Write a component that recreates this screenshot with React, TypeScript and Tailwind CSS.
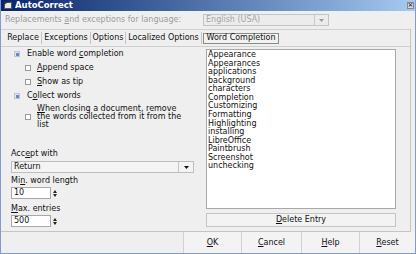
import React from "react";

const U = ({ children }: { children: React.ReactNode }) => <span className="underline underline-offset-[1px]">{children}</span>;

const Check = ({ checked }: { checked?: boolean }) => (
  <span className={`inline-flex items-center justify-center w-[6px] h-[6px] border ${checked ? "border-[#b8c4dc] bg-[#dfe5f2]" : "border-[#9a9a9a] bg-white"}`}>
    {checked && <span className="w-[3px] h-[3px] bg-[#6f86c4]" />}
  </span>
);

const Spin = ({ value }: { value: string }) => (
  <div className="flex h-[12px] w-[48px]">
    <div className="w-[40px] h-full bg-white border border-[#a8a8a8] flex items-center pl-[2px] leading-none">{value}</div>
    <div className="w-[8px] h-full flex flex-col items-center justify-center gap-[1px]">
      <svg width="4" height="3" viewBox="0 0 4 3"><path d="M0 3 L2 0 L4 3 Z" fill="#222" /></svg>
      <svg width="4" height="3" viewBox="0 0 4 3"><path d="M0 0 L4 0 L2 3 Z" fill="#222" /></svg>
    </div>
  </div>
);

const words = [
  "Appearance",
  "Appearances",
  "applications",
  "background",
  "characters",
  "Completion",
  "Customizing",
  "Formatting",
  "Highlighting",
  "installing",
  "LibreOffice",
  "Paintbrush",
  "Screenshot",
  "unchecking",
];

export default function App() {
  return (
    <div
      className="w-[416px] h-[254px] bg-[#efefef] flex flex-col overflow-hidden border-x border-b border-[#7f9bd2] text-[8px] text-[#111]"
      style={{ fontFamily: '"DejaVu Sans", sans-serif' }}
    >
      {/* Title bar */}
      <div className="h-[11px] shrink-0 flex items-center bg-gradient-to-r from-[#0a246a] to-[#a6caf0] pl-[3px] pr-[1px]">
        <svg width="8" height="7" viewBox="0 0 8 7" className="mr-[3px]">
          <rect x="0.5" y="0.5" width="7" height="6" fill="#e8e8e8" stroke="#555" strokeWidth="1" />
          <path d="M0 0 L4 0 L0 3 Z" fill="#333" />
        </svg>
        <span className="text-white font-bold text-[8.5px] leading-none">AutoCorrect</span>
        <div className="ml-auto w-[7px] h-[7px] bg-[#d8d8d8] border border-[#888] flex items-center justify-center text-[7px] leading-none text-black">
          ×
        </div>
      </div>

      {/* Language row */}
      <div className="h-[18px] shrink-0 flex items-center pl-[4px]">
        <span className="text-[#9c9c9c] w-[198px]">
          Replacements <U>a</U>nd exceptions for language:
        </span>
        <div className="ml-[0px] w-[126px] h-[12px] border border-[#c4c4c4] bg-[#ececec] flex items-center">
          <span className="flex-1 pl-[2px] text-[#a4a4a4] leading-none">English (USA)</span>
          <div className="w-[14px] h-full border-l border-[#c8c8c8] flex items-center justify-center">
            <svg width="5" height="3" viewBox="0 0 5 3"><path d="M0 0 L5 0 L2.5 3 Z" fill="#9a9a9a" /></svg>
          </div>
        </div>
      </div>

      {/* Tabs + panel frame */}
      <div className="flex-1 flex flex-col border-t border-[#d0d0d0] border-b border-b-[#c4c4c4] mr-[4px] border-r border-r-[#c4c4c4]">
        <div className="h-[17px] shrink-0 flex items-center pl-[4px] border-b border-[#cfcfcf]">
          <div className="w-[37px] h-[12px] flex items-center justify-center border-r border-[#c4c4c4]">Replace</div>
          <div className="w-[49px] h-[12px] flex items-center justify-center border-r border-[#c4c4c4]">Exceptions</div>
          <div className="w-[35px] h-[12px] flex items-center justify-center border-r border-[#c4c4c4]">Options</div>
          <div className="w-[76px] h-[12px] flex items-center justify-center border-r border-[#c4c4c4]">Localized Options</div>
          <div className="w-[76px] h-[11px] ml-[1px] flex items-center justify-center border border-[#8a8a8a] bg-[#f2f2f2]">Word Completion</div>
        </div>

        <div className="flex-1 flex">
          {/* Left column */}
          <div className="w-[200px] flex flex-col">
            <div className="h-[14px] flex items-center pl-[13px] mt-[0px]">
              <Check checked />
              <span className="ml-[7px]">Enable word <U>c</U>ompletion</span>
            </div>
            <div className="h-[14px] flex items-center pl-[24px]">
              <Check />
              <span className="ml-[6px]"><U>A</U>ppend space</span>
            </div>
            <div className="h-[14px] flex items-center pl-[24px]">
              <Check />
              <span className="ml-[6px]"><U>S</U>how as tip</span>
            </div>
            <div className="h-[14px] flex items-center pl-[13px]">
              <Check checked />
              <span className="ml-[7px]">C<U>o</U>llect words</span>
            </div>
            <div className="flex items-center pl-[24px] mt-[2px]">
              <Check />
              <div className="ml-[6px] leading-[8px]">
                <div><U>W</U>hen closing a document, remove</div>
                <div>the words collected from it from the</div>
                <div>list</div>
              </div>
            </div>

            <div className="mt-[20px] pl-[10px] h-[10px] flex items-center">
              Acc<U>e</U>pt with
            </div>
            <div className="ml-[10px] mt-[2px] w-[183px] h-[12px] bg-[#f4f4f4] border border-[#bdbdbd] flex items-center">
              <span className="flex-1 pl-[2px] leading-none">Return</span>
              <div className="w-[15px] h-full border-l border-[#c4c4c4] flex items-center justify-center">
                <svg width="5" height="3" viewBox="0 0 5 3"><path d="M0 0 L5 0 L2.5 3 Z" fill="#111" /></svg>
              </div>
            </div>
            <div className="mt-[2px] pl-[10px] h-[11px] flex items-center">
              Mi<U>n</U>. word length
            </div>
            <div className="ml-[10px] mt-[1px]">
              <Spin value="10" />
            </div>
            <div className="mt-[4px] pl-[10px] h-[11px] flex items-center">
              <U>M</U>ax. entries
            </div>
            <div className="ml-[10px] mt-[1px]">
              <Spin value="500" />
            </div>
          </div>

          {/* Right column */}
          <div className="flex-1 flex flex-col pl-[5px] pt-[2px]">
            <div className="w-[190px] h-[160px] bg-white border border-[#a8a8a8] pl-[1px] pt-[1px] leading-[8.57px]">
              {words.map((w) => (
                <div key={w}>{w}</div>
              ))}
            </div>
            <div className="mt-[4px] w-[190px] h-[14px] border border-[#c4c4c4] bg-[#f3f3f3] flex items-center justify-center">
              <span><U>D</U>elete Entry</span>
            </div>
          </div>
        </div>
      </div>

      {/* Bottom buttons */}
      <div className="h-[21px] shrink-0 flex justify-end">
        <div className="w-[58px] h-full flex items-center justify-center border-l border-[#d2d2d2] bg-[#f3f3f3]"><span><U>O</U>K</span></div>
        <div className="w-[60px] h-full flex items-center justify-center border-l border-[#d2d2d2] bg-[#f3f3f3]"><span><U>C</U>ancel</span></div>
        <div className="w-[58px] h-full flex items-center justify-center border-l border-[#d2d2d2] bg-[#f3f3f3]"><span><U>H</U>elp</span></div>
        <div className="w-[56px] h-full flex items-center justify-center border-l border-[#d2d2d2] bg-[#f3f3f3]"><span><U>R</U>eset</span></div>
      </div>
    </div>
  );
}
